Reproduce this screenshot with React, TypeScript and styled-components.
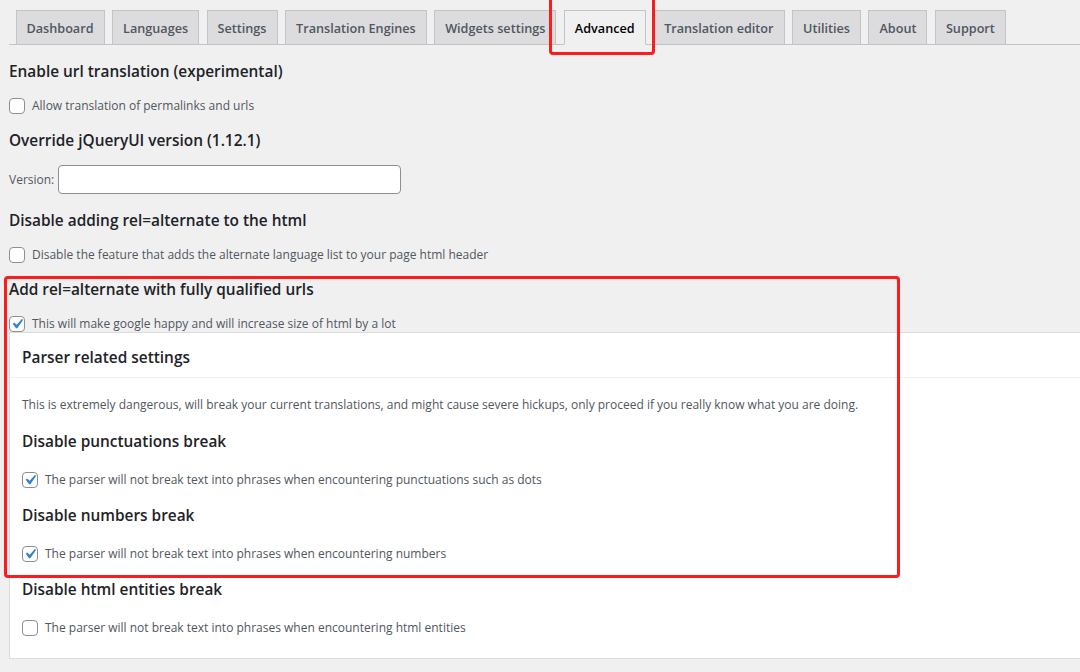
import React from "react";
import styled, { createGlobalStyle } from "styled-components";

const GlobalStyle = createGlobalStyle`
  html, body {
    margin: 0;
    padding: 0;
    background: #f0f0f1;
    overflow: hidden;
  }
  body {
    font-family: "Open Sans", "Noto Sans", sans-serif;
    color: #3c434a;
    -webkit-font-smoothing: antialiased;
  }
  * { box-sizing: border-box; }
`;

const Page = styled.div`
  position: relative;
  width: 1080px;
  height: 672px;
  padding-left: 9px;
  overflow: hidden;
`;

const NavBar = styled.nav`
  display: flex;
  gap: 7.5px;
  padding: 10px 0 0 6.5px;
  border-bottom: 1px solid #c3c4c7;
`;

const Tab = styled.div<{ $active?: boolean }>`
  height: 35px;
  margin-bottom: -1px;
  padding: 0 10px;
  border: 1px solid #c3c4c7;
  border-bottom-color: ${(p) => (p.$active ? "#f0f0f1" : "#c3c4c7")};
  background: ${(p) => (p.$active ? "#f0f0f1" : "#dcdcde")};
  color: ${(p) => (p.$active ? "#000" : "#50575e")};
  font-size: 12.65px;
  font-weight: 600;
  line-height: 34px;
  white-space: nowrap;
`;

const Content = styled.div`
  padding-top: 15.5px;
`;

const Section = styled.section<{ $gap: number; $after: number }>`
  display: flex;
  flex-direction: column;
  gap: ${(p) => p.$gap}px;
  margin-bottom: ${(p) => p.$after}px;
`;

const Heading = styled.h2`
  margin: 0;
  font-size: 15.4px;
  font-weight: 600;
  line-height: 22px;
  color: #1d2327;
`;

const CheckRow = styled.label`
  display: flex;
  align-items: center;
  gap: 7px;
  height: 16px;
  font-size: 12px;
  color: #50575e;
`;

const Box = styled.span`
  position: relative;
  flex: none;
  width: 16px;
  height: 16px;
  border: 1px solid #8c8f94;
  border-radius: 4px;
  background: #fff;
`;

const CheckMark = styled.svg`
  position: absolute;
  left: -3px;
  top: -3px;
  width: 20px;
  height: 20px;
`;

const VersionRow = styled.div`
  display: flex;
  align-items: center;
  gap: 4px;
  margin-top: -2px;
  font-size: 12px;
  color: #50575e;
`;

const Input = styled.input`
  width: 343px;
  height: 29px;
  border: 1px solid #8c8f94;
  border-radius: 4px;
  background: #fff;
  font: inherit;
`;

const Panel = styled.div`
  margin-right: -20px;
  background: #fff;
  border: 1px solid #dcdcde;
`;

const PanelHeader = styled.div`
  padding: 14px 12px 8px;
  border-bottom: 1px solid #f0f0f1;
`;

const PanelBody = styled.div`
  padding: 17px 12px 22px;
`;

const Para = styled.p`
  margin: 0 0 16px;
  font-size: 12px;
  line-height: 20px;
  color: #50575e;
`;

const Highlight = styled.div<{ $l: number; $t: number; $w: number; $h: number }>`
  position: absolute;
  left: ${(p) => p.$l}px;
  top: ${(p) => p.$t}px;
  width: ${(p) => p.$w}px;
  height: ${(p) => p.$h}px;
  border: 3px solid #fb1c1c;
  border-radius: 4px;
  pointer-events: none;
`;

const Checkbox: React.FC<{ checked?: boolean; label: string }> = ({ checked, label }) => (
  <CheckRow>
    <Box>
      {checked && (
        <CheckMark viewBox="0 0 20 20">
          <path d="M14.83 4.89l1.34.94-5.81 8.38H9.02L5.78 9.67l1.34-1.25 2.57 2.4z" fill="#3582c4" />
        </CheckMark>
      )}
    </Box>
    {label}
  </CheckRow>
);

const tabs = [
  "Dashboard",
  "Languages",
  "Settings",
  "Translation Engines",
  "Widgets settings",
  "Advanced",
  "Translation editor",
  "Utilities",
  "About",
  "Support",
];

export default function App() {
  return (
    <>
      <GlobalStyle />
      <Page>
        <NavBar>
          {tabs.map((t) => (
            <Tab key={t} $active={t === "Advanced"}>
              {t}
            </Tab>
          ))}
        </NavBar>
        <Content>
          <Section $gap={15} $after={16}>
            <Heading>Enable url translation (experimental)</Heading>
            <Checkbox label="Allow translation of permalinks and urls" />
          </Section>
          <Section $gap={15} $after={16}>
            <Heading>Override jQueryUI version (1.12.1)</Heading>
            <VersionRow>
              Version:
              <Input type="text" />
            </VersionRow>
          </Section>
          <Section $gap={15} $after={16}>
            <Heading>Disable adding rel=alternate to the html</Heading>
            <Checkbox label="Disable the feature that adds the alternate language list to your page html header" />
          </Section>
          <Section $gap={15} $after={0}>
            <Heading>Add rel=alternate with fully qualified urls</Heading>
            <Checkbox checked label="This will make google happy and will increase size of html by a lot" />
          </Section>
          <Panel>
            <PanelHeader>
              <Heading>Parser related settings</Heading>
            </PanelHeader>
            <PanelBody>
              <Para>
                This is extremely dangerous, will break your current translations, and might cause severe hickups,
                only proceed if you really know what you are doing.
              </Para>
              <Section $gap={19} $after={17}>
                <Heading>Disable punctuations break</Heading>
                <Checkbox checked label="The parser will not break text into phrases when encountering punctuations such as dots" />
              </Section>
              <Section $gap={19} $after={17}>
                <Heading>Disable numbers break</Heading>
                <Checkbox checked label="The parser will not break text into phrases when encountering numbers" />
              </Section>
              <Section $gap={19} $after={0}>
                <Heading>Disable html entities break</Heading>
                <Checkbox label="The parser will not break text into phrases when encountering html entities" />
              </Section>
            </PanelBody>
          </Panel>
        </Content>
        <Highlight $l={549} $t={-4} $w={106} $h={59} />
        <Highlight $l={4} $t={276} $w={896} $h={302} />
      </Page>
    </>
  );
}
